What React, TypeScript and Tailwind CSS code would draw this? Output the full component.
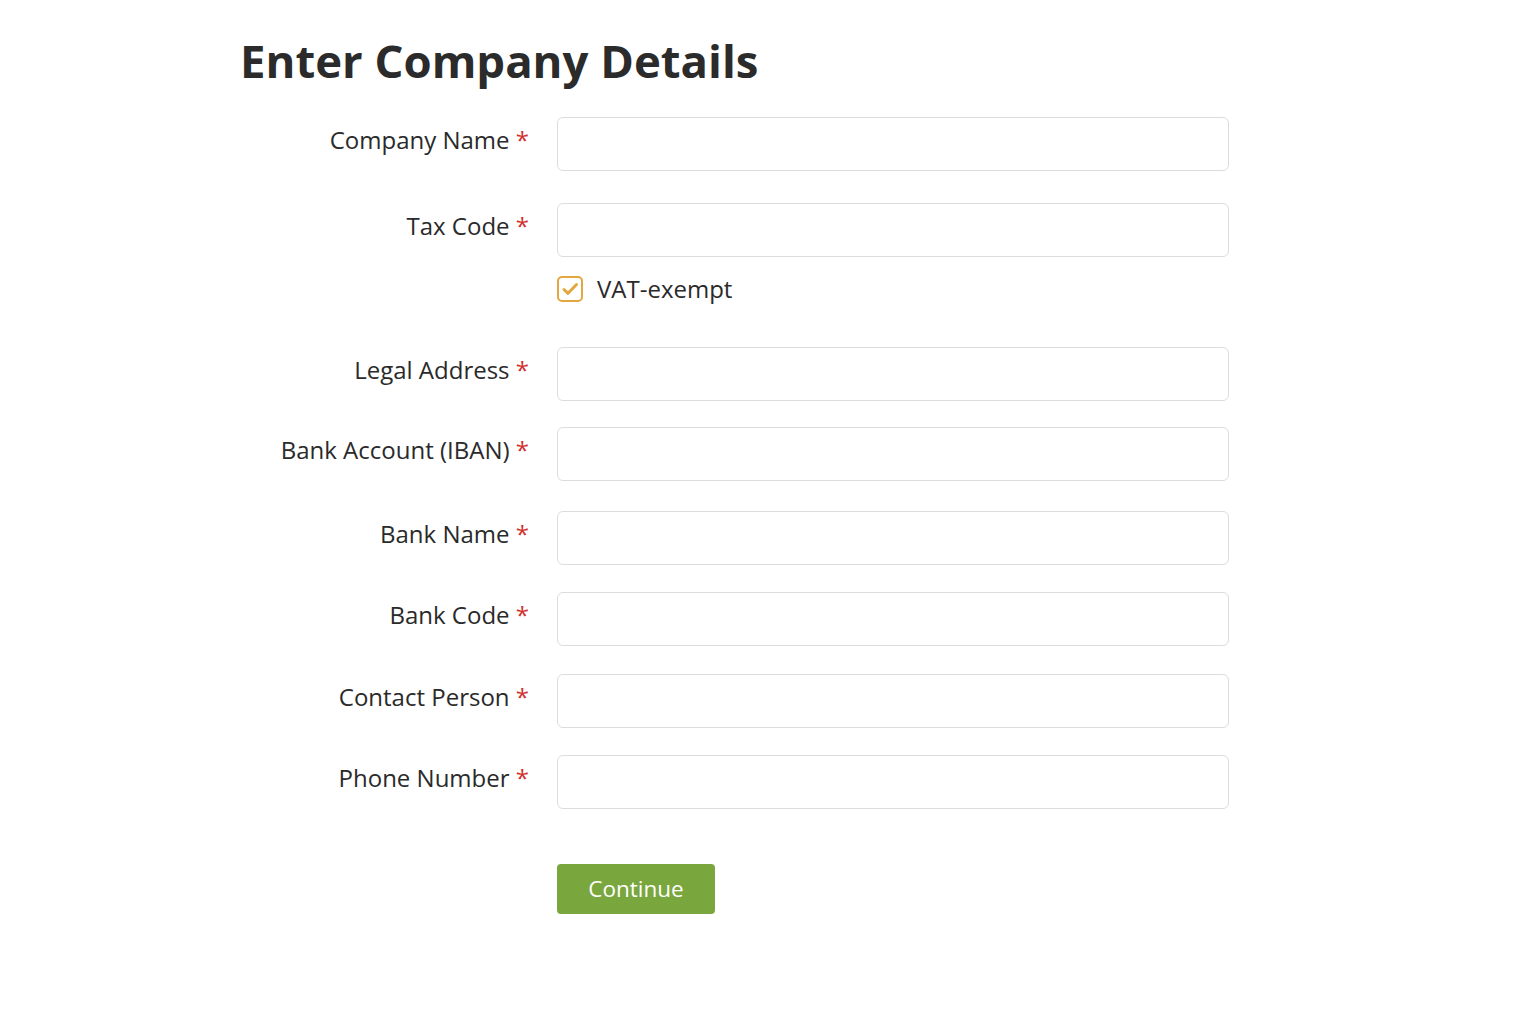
import { useState } from 'react'

const fields = [
  { id: 'company', label: 'Company Name', mt: 'mt-0' },
  { id: 'tax', label: 'Tax Code', mt: 'mt-[32px]' },
]

const restFields = [
  { id: 'address', label: 'Legal Address', mt: 'mt-[45px]' },
  { id: 'iban', label: 'Bank Account (IBAN)', mt: 'mt-[26px]' },
  { id: 'bankName', label: 'Bank Name', mt: 'mt-[30px]' },
  { id: 'bankCode', label: 'Bank Code', mt: 'mt-[27px]' },
  { id: 'contact', label: 'Contact Person', mt: 'mt-[28px]' },
  { id: 'phone', label: 'Phone Number', mt: 'mt-[27px]' },
]

function Field({ id, label, mt }: { id: string; label: string; mt: string }) {
  return (
    <div className={`flex items-start ${mt}`}>
      <label
        htmlFor={id}
        className="w-[289px] shrink-0 pt-[7px] text-right text-[24px] leading-[32px] text-[#2a2a2a]"
      >
        {label} <span className="text-[#d0312d]">*</span>
      </label>
      <input
        id={id}
        type="text"
        className="ml-[28px] h-[54px] w-[672px] rounded-[6px] border border-[#dcdcdc] bg-white px-3 text-[20px] outline-none"
      />
    </div>
  )
}

export default function App() {
  const [vatExempt, setVatExempt] = useState(true)

  return (
    <div className="min-h-screen bg-white font-['Open_Sans',sans-serif]">
      <div className="pl-[240px] pt-[32px]">
        <h1 className="text-[45.5px] font-bold leading-[56px] text-[#2b2b2b]">Enter Company Details</h1>

        <form className="mt-[29px]" onSubmit={(e) => e.preventDefault()}>
          {fields.map((f) => (
            <Field key={f.id} {...f} />
          ))}

          <div className="ml-[317px] mt-[19px] flex items-center">
            <button
              type="button"
              onClick={() => setVatExempt(!vatExempt)}
              className="flex h-[26px] w-[26px] items-center justify-center rounded-[5px] border-2 border-[#e3a73f] bg-white"
            >
              {vatExempt && (
                <svg width="20" height="20" viewBox="0 0 20 20" fill="none">
                  <path d="M4 10.5l4 3.8L16.5 5.5" stroke="#e3a73f" strokeWidth="3" strokeLinecap="round" strokeLinejoin="round" />
                </svg>
              )}
            </button>
            <span className="ml-[14px] text-[24px] leading-[26px] text-[#2a2a2a]">VAT-exempt</span>
          </div>

          {restFields.map((f) => (
            <Field key={f.id} {...f} />
          ))}

          <div className="ml-[317px] mt-[55px]">
            <button
              type="submit"
              className="h-[50px] w-[158px] rounded-[4px] bg-[#79a63d] text-[22.5px] text-white"
            >
              Continue
            </button>
          </div>
        </form>
      </div>
    </div>
  )
}
